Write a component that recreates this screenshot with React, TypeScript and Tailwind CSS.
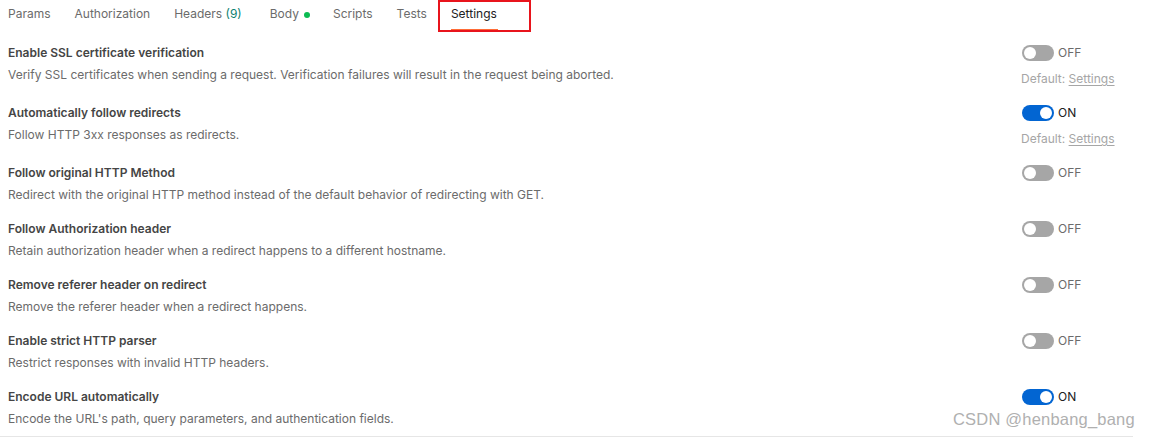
import React from "react";

type Setting = {
  title: string;
  description: string;
  on: boolean;
  showDefault?: boolean;
};

const SETTINGS: Setting[] = [
  {
    title: "Enable SSL certificate verification",
    description:
      "Verify SSL certificates when sending a request. Verification failures will result in the request being aborted.",
    on: false,
    showDefault: true,
  },
  {
    title: "Automatically follow redirects",
    description: "Follow HTTP 3xx responses as redirects.",
    on: true,
    showDefault: true,
  },
  {
    title: "Follow original HTTP Method",
    description:
      "Redirect with the original HTTP method instead of the default behavior of redirecting with GET.",
    on: false,
  },
  {
    title: "Follow Authorization header",
    description:
      "Retain authorization header when a redirect happens to a different hostname.",
    on: false,
  },
  {
    title: "Remove referer header on redirect",
    description: "Remove the referer header when a redirect happens.",
    on: false,
  },
  {
    title: "Enable strict HTTP parser",
    description: "Restrict responses with invalid HTTP headers.",
    on: false,
  },
  {
    title: "Encode URL automatically",
    description:
      "Encode the URL's path, query parameters, and authentication fields.",
    on: true,
  },
];

function Toggle({ on }: { on: boolean }) {
  return (
    <div className="flex items-center gap-[4px] pl-[1px]">
      <div
        className={`flex h-[16px] w-[32px] items-center rounded-full px-[2px] ${
          on ? "justify-end bg-[#0265d2]" : "justify-start bg-[#a6a6a6]"
        }`}
      >
        <div className="h-[12px] w-[12px] rounded-full bg-white" />
      </div>
      <span
        className={`text-[12px] leading-none ${
          on ? "text-[#212121]" : "text-[#6b6b6b]"
        }`}
      >
        {on ? "ON" : "OFF"}
      </span>
    </div>
  );
}

export default function App() {
  return (
    <div
      className="relative h-[438px] w-[1150px] overflow-hidden bg-white"
      style={{ fontFamily: "Inter, 'Noto Sans', sans-serif" }}
    >
      {/* Tab bar */}
      <div className="flex h-[32px] items-start gap-[24px] pl-[8px] text-[12px] text-[#6b6b6b]">
        <div className="pt-[5px]">Params</div>
        <div className="pt-[5px]">Authorization</div>
        <div className="pt-[5px]">
          Headers <span className="text-[#0f8270]">(9)</span>
        </div>
        <div className="ml-[4px] flex items-center gap-[5px] pt-[5px]">
          Body
          <span className="mt-[1px] h-[6px] w-[6px] rounded-full bg-[#0cbb52]" />
        </div>
        <div className="-ml-[1px] pt-[5px]">Scripts</div>
        <div className="pt-[5px]">Tests</div>
        <div className="-ml-[13px] flex h-[32px] w-[93px] flex-col border-2 border-[#e8141c] pl-[11px] pt-[3px]">
          <span className="text-[#212121]">Settings</span>
          <span className="mt-[6px] h-[2px] w-[47px] bg-[#ff6c37]" />
        </div>
      </div>

      {/* Settings list */}
      <div className="w-[1133px] border-b border-[#e6e6e6] pt-[9px]">
        {SETTINGS.map((s, i) => (
          <div key={s.title} className="flex pl-[8px]">
            <div className="flex-1">
              <div className="text-[12px] font-semibold leading-[24px] text-[#454545]">
                {s.title}
              </div>
              <div
                className={`text-[12px] leading-[20px] text-[#6b6b6b] ${
                  s.showDefault
                    ? "pb-[16px]"
                    : i === SETTINGS.length - 1
                    ? "pb-[7px]"
                    : "pb-[12px]"
                }`}
              >
                {s.description}
              </div>
            </div>
            <div className="flex w-[112px] flex-col pt-[4px]">
              <Toggle on={s.on} />
              {s.showDefault && (
                <div className="mt-[9px] text-[12px] text-[#a6a6a6]">
                  Default:{" "}
                  <span className="underline underline-offset-2">Settings</span>
                </div>
              )}
            </div>
          </div>
        ))}
      </div>

      {/* Watermark */}
      <div
        className="absolute left-[953px] top-[407px] text-[16.5px] tracking-[0.2px] text-[#b0b0b0]"
        style={{ fontFamily: "'Liberation Sans', Arial, sans-serif" }}
      >
        CSDN @henbang_bang
      </div>
    </div>
  );
}
